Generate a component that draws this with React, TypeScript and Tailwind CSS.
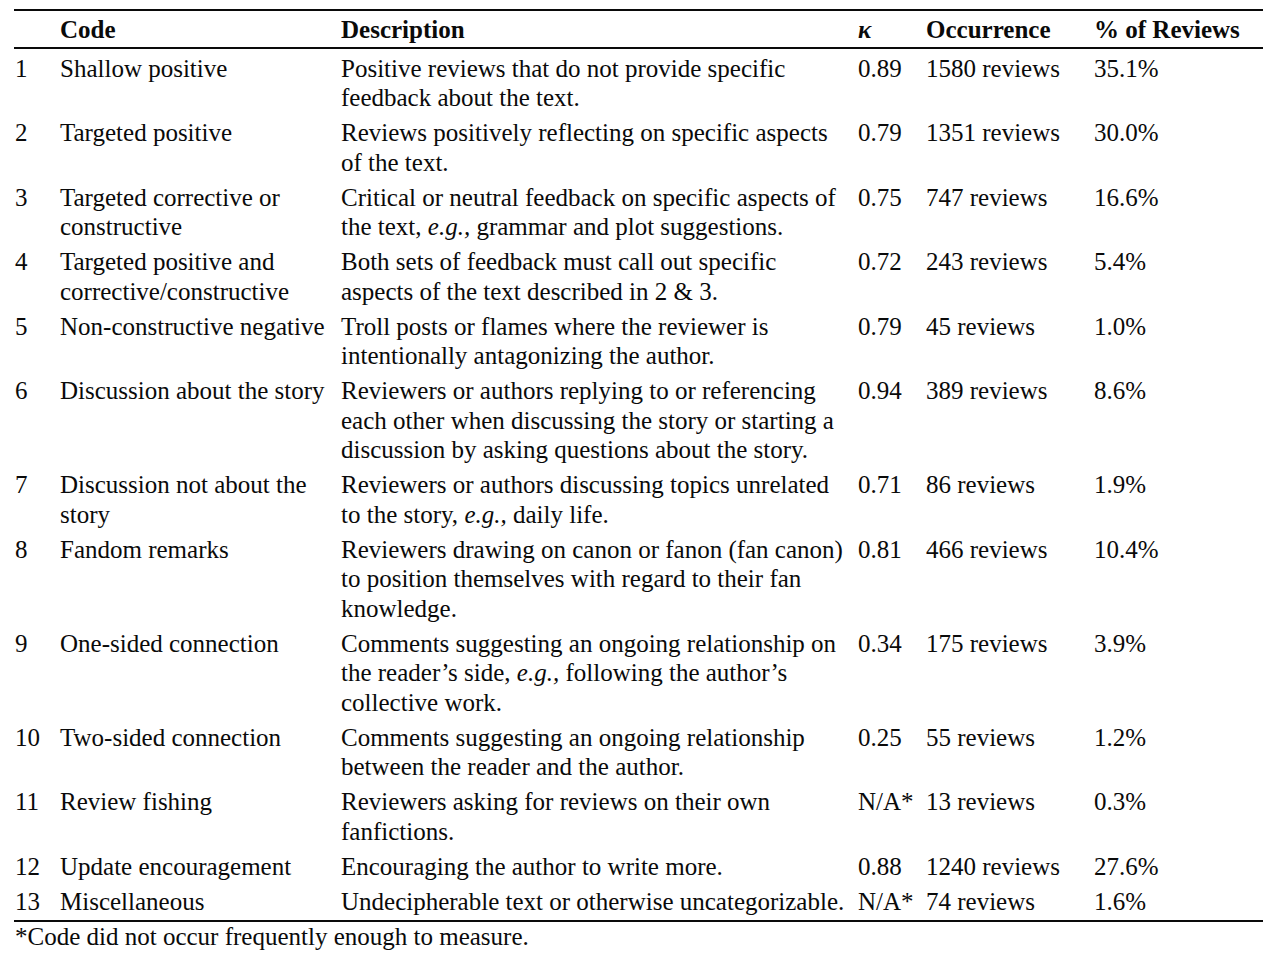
import React from 'react';

type Row = {
  n: string;
  code: React.ReactNode[];
  desc: React.ReactNode[];
  k: string;
  occ: string;
  pct: string;
};

const eg = <i>e.g.,</i>;

const rows: Row[] = [
  { n: '1', code: ['Shallow positive'], desc: ['Positive reviews that do not provide specific', 'feedback about the text.'], k: '0.89', occ: '1580 reviews', pct: '35.1%' },
  { n: '2', code: ['Targeted positive'], desc: ['Reviews positively reflecting on specific aspects', 'of the text.'], k: '0.79', occ: '1351 reviews', pct: '30.0%' },
  { n: '3', code: ['Targeted corrective or', 'constructive'], desc: ['Critical or neutral feedback on specific aspects of', <>the text, {eg} grammar and plot suggestions.</>], k: '0.75', occ: '747 reviews', pct: '16.6%' },
  { n: '4', code: ['Targeted positive and', 'corrective/constructive'], desc: ['Both sets of feedback must call out specific', 'aspects of the text described in 2 & 3.'], k: '0.72', occ: '243 reviews', pct: '5.4%' },
  { n: '5', code: ['Non-constructive negative'], desc: ['Troll posts or flames where the reviewer is', 'intentionally antagonizing the author.'], k: '0.79', occ: '45 reviews', pct: '1.0%' },
  { n: '6', code: ['Discussion about the story'], desc: ['Reviewers or authors replying to or referencing', 'each other when discussing the story or starting a', 'discussion by asking questions about the story.'], k: '0.94', occ: '389 reviews', pct: '8.6%' },
  { n: '7', code: ['Discussion not about the', 'story'], desc: ['Reviewers or authors discussing topics unrelated', <>to the story, {eg} daily life.</>], k: '0.71', occ: '86 reviews', pct: '1.9%' },
  { n: '8', code: ['Fandom remarks'], desc: ['Reviewers drawing on canon or fanon (fan canon)', 'to position themselves with regard to their fan', 'knowledge.'], k: '0.81', occ: '466 reviews', pct: '10.4%' },
  { n: '9', code: ['One-sided connection'], desc: ['Comments suggesting an ongoing relationship on', <>the reader’s side, {eg} following the author’s</>, 'collective work.'], k: '0.34', occ: '175 reviews', pct: '3.9%' },
  { n: '10', code: ['Two-sided connection'], desc: ['Comments suggesting an ongoing relationship', 'between the reader and the author.'], k: '0.25', occ: '55 reviews', pct: '1.2%' },
  { n: '11', code: ['Review fishing'], desc: ['Reviewers asking for reviews on their own', 'fanfictions.'], k: 'N/A*', occ: '13 reviews', pct: '0.3%' },
  { n: '12', code: ['Update encouragement'], desc: ['Encouraging the author to write more.'], k: '0.88', occ: '1240 reviews', pct: '27.6%' },
  { n: '13', code: ['Miscellaneous'], desc: ['Undecipherable text or otherwise uncategorizable.'], k: 'N/A*', occ: '74 reviews', pct: '1.6%' },
];

const cols = 'grid grid-cols-[46px_281px_517px_68px_168px_169px]';

function Lines({ items }: { items: React.ReactNode[] }) {
  return (
    <div className="flex flex-col">
      {items.map((t, i) => (
        <span key={i} className="whitespace-nowrap">{t}</span>
      ))}
    </div>
  );
}

export default function App() {
  return (
    <div className="min-h-[961px] w-[1280px] bg-white text-[#0a0a0a] font-['Liberation_Serif','Times_New_Roman',serif] text-[25px] leading-[29.5px] pt-[9px] pl-[14px]">
      <div className="w-[1249px]">
        {/* header */}
        <div className={`${cols} border-t-2 border-b-2 border-[#0a0a0a] pt-[4px] pb-[2.5px] font-bold`}>
          <span></span>
          <span>Code</span>
          <span>Description</span>
          <span className="italic">κ</span>
          <span>Occurrence</span>
          <span>% of Reviews</span>
        </div>

        {/* body */}
        <div className="border-b-2 border-[#0a0a0a] pb-[4px]">
          {rows.map((r, i) => (
            <div key={r.n} className={`${cols} ${i === 0 ? 'pt-[4.5px]' : 'pt-[5.5px]'}`}>
              <span className="pl-[1px]">{r.n}</span>
              <Lines items={r.code} />
              <Lines items={r.desc} />
              <span className="whitespace-nowrap">{r.k}</span>
              <span className="whitespace-nowrap">{r.occ}</span>
              <span>{r.pct}</span>
            </div>
          ))}
        </div>

        <div className="pl-[1px]">*Code did not occur frequently enough to measure.</div>
      </div>
    </div>
  );
}
